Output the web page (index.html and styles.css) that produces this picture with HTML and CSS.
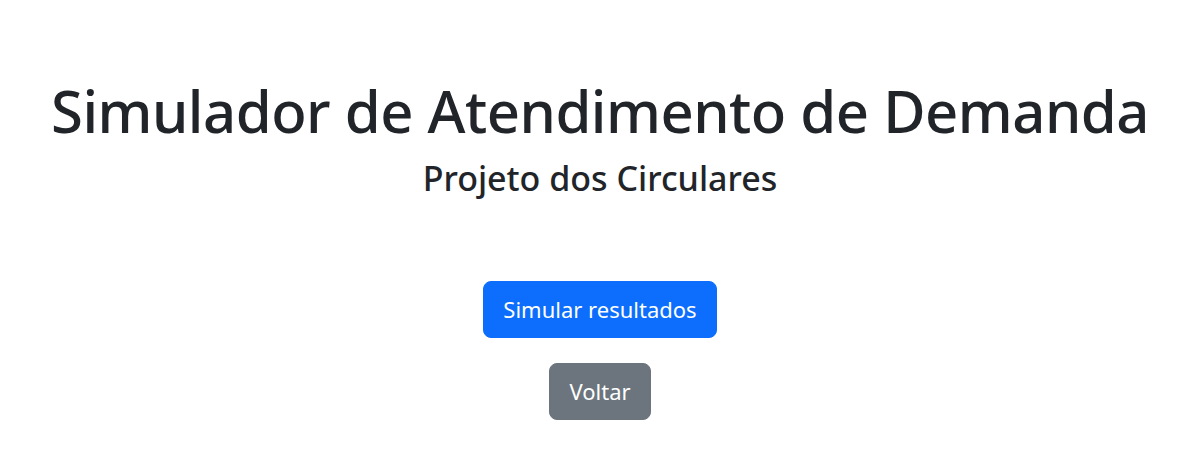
FILE: index.html
```html
<!DOCTYPE html>
<html lang="pt-BR">
<head>
<meta charset="utf-8">
<title>Simulador de Atendimento de Demanda</title>
<link rel="stylesheet" href="styles.css">
</head>
<body>
<main class="page">
  <header class="hero">
    <h1 class="title">Simulador de Atendimento de Demanda</h1>
    <h2 class="subtitle">Projeto dos Circulares</h2>
  </header>
  <div class="actions">
    <button class="btn btn-primary" type="button">Simular resultados</button>
    <button class="btn btn-secondary" type="button">Voltar</button>
  </div>
</main>
</body>
</html>
```
FILE: styles.css
```css
* { box-sizing: border-box; }
html, body { margin: 0; padding: 0; background: #fff; }
body {
  font-family: "Noto Sans", "Open Sans", sans-serif;
  color: #212529;
}
.page {
  display: flex;
  flex-direction: column;
  align-items: center;
  padding-top: 76px;
  padding-left: 3px;
}
.hero {
  display: flex;
  flex-direction: column;
  align-items: center;
}
.title {
  margin: 0;
  font-size: 58px;
  font-weight: 500;
  line-height: 1.2;
  letter-spacing: -0.5px;
}
.subtitle {
  margin: 12px 0 0;
  font-size: 34px;
  font-weight: 500;
  line-height: 1.2;
}
.actions {
  display: flex;
  flex-direction: column;
  align-items: center;
  gap: 25px;
  margin-top: 83px;
}
.btn {
  font-family: inherit;
  font-size: 22px;
  line-height: 1.5;
  padding: 11px 19px;
  border: 1px solid transparent;
  border-radius: 8px;
  color: #fff;
  cursor: pointer;
}
.btn-primary { background: #0d6efd; border-color: #0d6efd; }
.btn-secondary { background: #6c757d; border-color: #6c757d; }
```
